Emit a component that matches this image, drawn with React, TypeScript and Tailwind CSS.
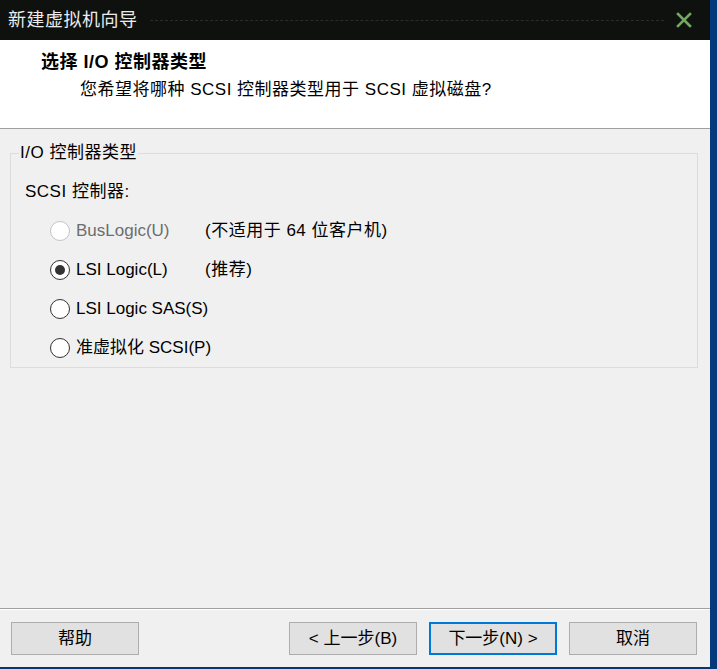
const font = "font-['Liberation_Sans','Noto_Sans_CJK_SC',sans-serif]";

function Radio({ checked, disabled }: { checked?: boolean; disabled?: boolean }) {
    return (
        <span
            className={`flex h-[20px] w-[20px] shrink-0 items-center justify-center rounded-full border bg-white ${
                disabled ? "border-[#c4c4c4] bg-[#fbfbfb]" : "border-[#333333]"
            }`}
        >
            {checked && <span className="h-[10px] w-[10px] rounded-full bg-[#333333]" />}
        </span>
    );
}

function Option({ label, note, checked, disabled }: { label: string; note?: string; checked?: boolean; disabled?: boolean }) {
    return (
        <div className="flex h-[39px] items-center whitespace-nowrap pl-[31px]">
            <Radio checked={checked} disabled={disabled} />
            <span className={`ml-[6px] min-w-[129px] ${disabled ? "text-[#6d6d6d]" : "text-black"}`}>{label}</span>
            {note && <span className="tracking-[0.5px] text-black">{note}</span>}
        </div>
    );
}

function Button({ children, focused }: { children: React.ReactNode; focused?: boolean }) {
    return (
        <button
            className={`flex h-[33px] w-[128px] items-center justify-center whitespace-nowrap bg-[#e1e1e1] text-black ${
                focused ? "border-2 border-[#0078d7]" : "border border-[#adadad]"
            }`}
        >
            {children}
        </button>
    );
}

export default function App() {
    return (
        <div className={`flex h-[669px] w-[717px] text-[17px] leading-[20px] ${font}`}>
            <div className="flex w-[710px] flex-col">
                {/* title bar */}
                <div className="flex h-[40px] items-center bg-[#0f110e] pl-[8px] pr-[16px]">
                    <span className="text-[18px] tracking-[0.5px] text-[#ececec]">新建虚拟机向导</span>
                    <div className="mx-[12px] flex-1 border-t border-dashed border-[#2a2f26]" />
                    <svg width="16" height="16" viewBox="0 0 16 16" className="mr-[2px]">
                        <path d="M2 2 L14 14 M14 2 L2 14" stroke="#74a862" strokeWidth="2.6" strokeLinecap="square" />
                    </svg>
                </div>

                {/* header */}
                <div className="h-[89px] border-b border-[#a0a0a0] bg-white pt-[12px]">
                    <div className="pl-[41px] text-[18px] font-bold tracking-[0.5px] text-black">选择 I/O 控制器类型</div>
                    <div className="mt-[8px] whitespace-nowrap pl-[80px] tracking-[0.5px] text-black">
                        您希望将哪种 SCSI 控制器类型用于 SCSI 虚拟磁盘?
                    </div>
                </div>

                {/* body */}
                <div className="flex-1 bg-[#f0f0f0] pt-[14px]">
                    <fieldset className="ml-[10px] w-[688px] border border-[#dcdcdc] px-[8px]">
                        <legend className="px-[1px] tracking-[0.5px] text-black">I/O 控制器类型</legend>
                        <div className="mt-[19px] pl-[6px] tracking-[0.5px] text-black">SCSI 控制器:</div>
                        <div className="mt-[9px]">
                            <Option label="BusLogic(U)" note="(不适用于 64 位客户机)" disabled />
                            <Option label="LSI Logic(L)" note="(推荐)" checked />
                            <Option label="LSI Logic SAS(S)" />
                            <Option label="准虚拟化 SCSI(P)" />
                        </div>
                    </fieldset>
                </div>

                {/* footer */}
                <div className="border-t border-[#a0a0a0] bg-[#f0f0f0]">
                    <div className="flex h-[58px] items-start border-t border-white pl-[11px] pr-[13px] pt-[12px]">
                        <Button>帮助</Button>
                        <div className="flex-1" />
                        <div className="flex gap-[12px]">
                            <Button>&lt; 上一步(B)</Button>
                            <Button focused>下一步(N) &gt;</Button>
                            <Button>取消</Button>
                        </div>
                    </div>
                </div>
                <div className="h-[2px] bg-[#0b3570]" />
            </div>
            <div className="w-[7px] bg-[#043a7c]" />
        </div>
    );
}
